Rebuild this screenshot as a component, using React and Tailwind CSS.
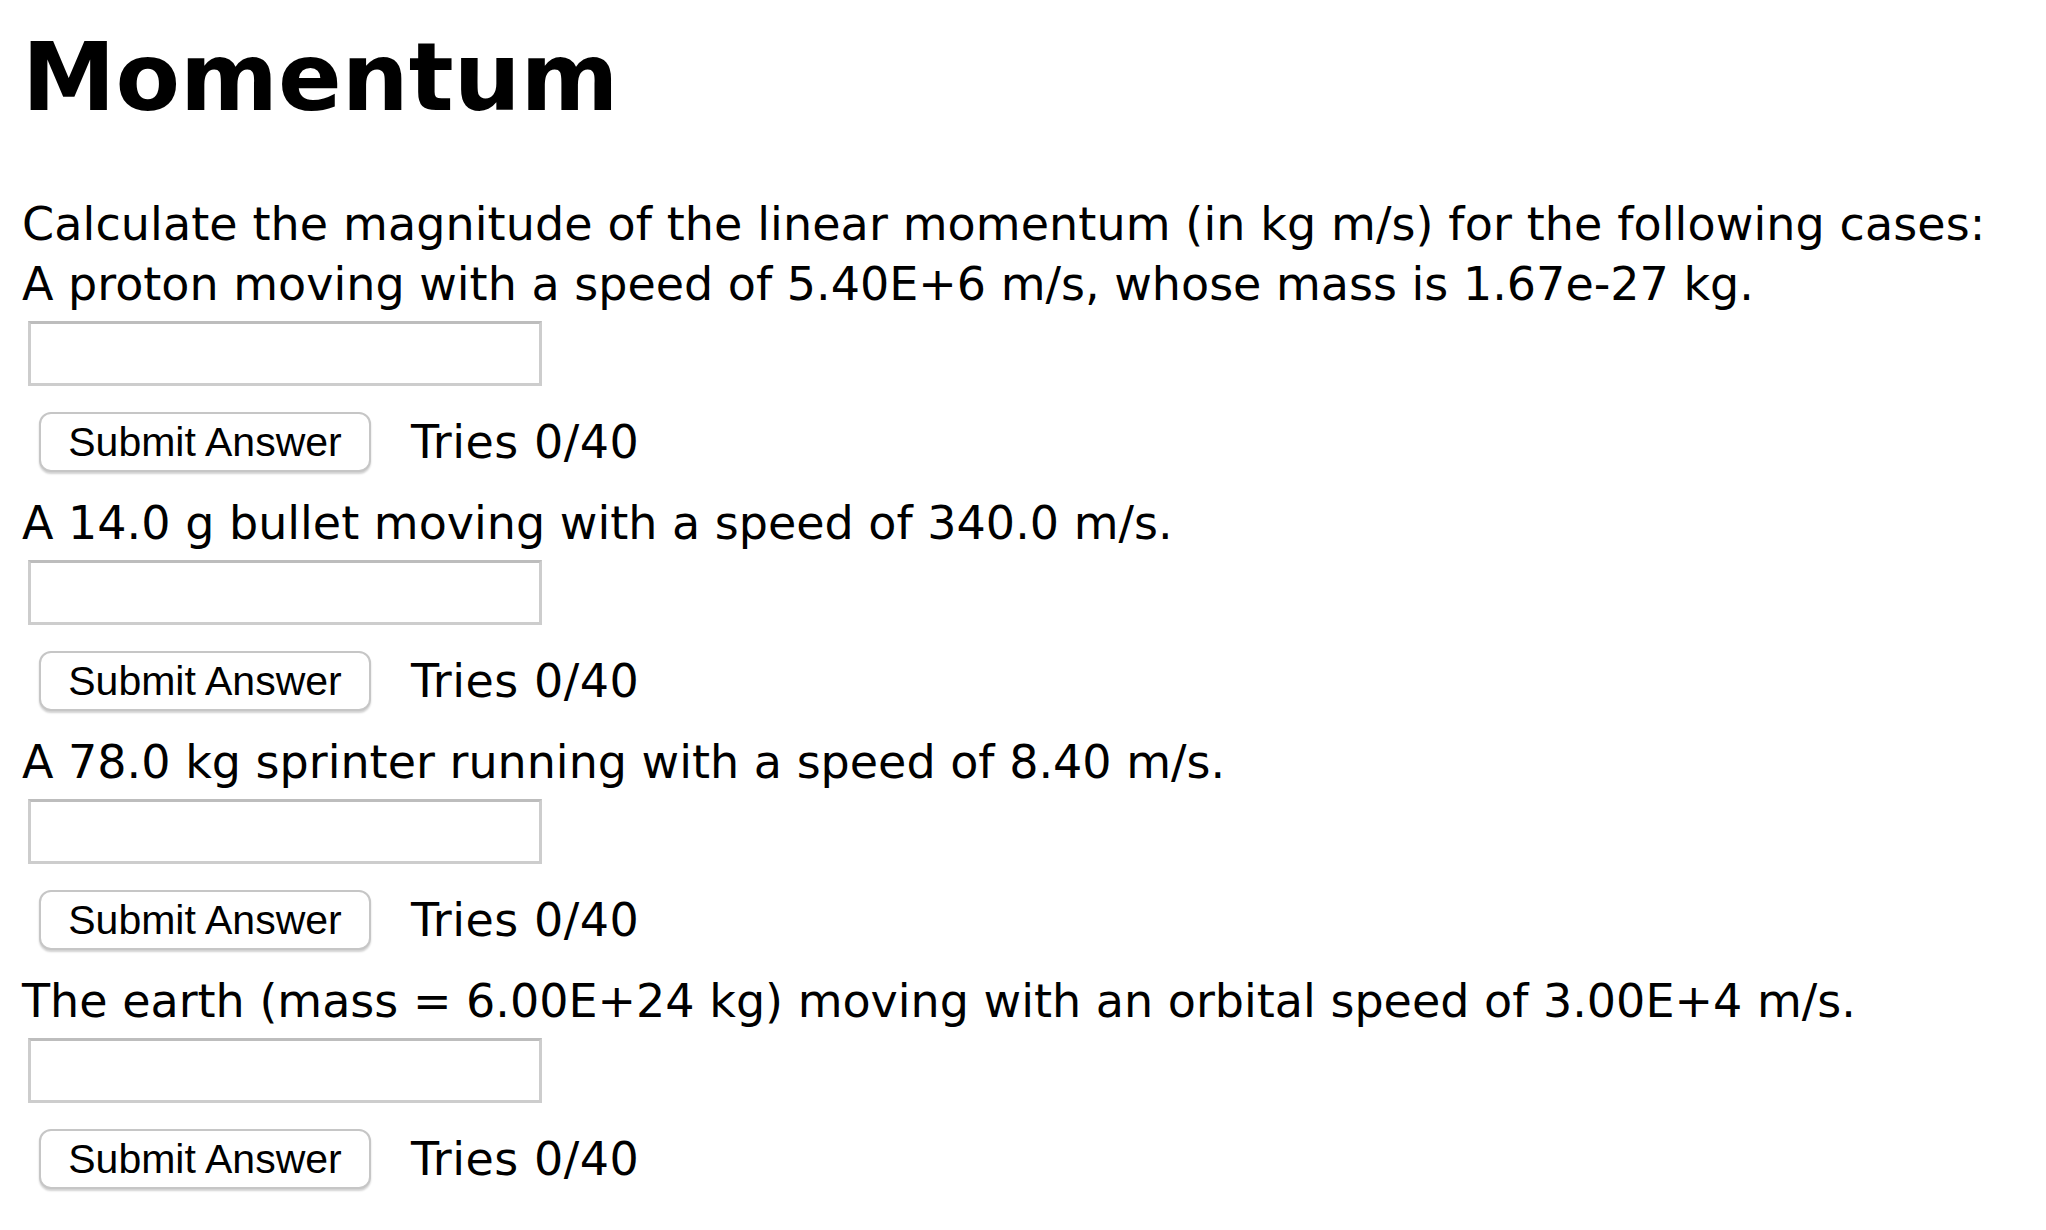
const questions = [
  'A proton moving with a speed of 5.40E+6 m/s, whose mass is 1.67e-27 kg.',
  'A 14.0 g bullet moving with a speed of 340.0 m/s.',
  'A 78.0 kg sprinter running with a speed of 8.40 m/s.',
  'The earth (mass = 6.00E+24 kg) moving with an orbital speed of 3.00E+4 m/s.',
];

const Part = ({ text, first }) => (
  <div className={first ? '' : 'mt-[21px]'}>
    <p className="text-[46px] leading-[60px] text-black">{text}</p>
    <input
      type="text"
      className="block mt-[7px] ml-[6px] w-[514px] h-[65px] bg-white border-[3px] border-[#cdcdcd] border-t-[#bdbdbd] outline-none"
    />
    <div className="flex items-center mt-[26px] ml-[17px]">
      <button
        type="button"
        className="w-[332px] h-[60px] bg-white border-2 border-[#c6c6c6] rounded-[12px] shadow-[0_2px_2px_rgba(0,0,0,0.18)] text-[41px] leading-none text-black"
        style={{ fontFamily: '"Liberation Sans", Arial, sans-serif' }}
      >
        Submit Answer
      </button>
      <span className="ml-[40px] text-[46px] leading-[60px] tracking-[0.5px] text-black">Tries 0/40</span>
    </div>
  </div>
);

export default function App() {
  return (
    <div
      className="w-[2046px] min-h-[1230px] bg-white pl-[22px] pt-[23px]"
      style={{ fontFamily: '"DejaVu Sans", Verdana, sans-serif' }}
    >
      <h1 className="text-[94px] leading-[110px] font-bold text-black">Momentum</h1>
      <div className="mt-[61px]">
        <p className="text-[46px] leading-[60px] tracking-[0.1px] text-black">
          Calculate the magnitude of the linear momentum (in kg m/s) for the following cases:
        </p>
        {questions.map((q, i) => (
          <Part key={i} text={q} first={i === 0} />
        ))}
      </div>
    </div>
  );
}
